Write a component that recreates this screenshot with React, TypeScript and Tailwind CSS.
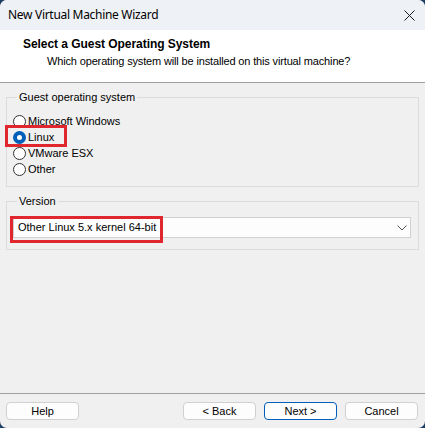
import React from "react";

const body = { fontFamily: '"Liberation Sans", Arial, sans-serif' };

function Radio({ label, checked }: { label: string; checked?: boolean }) {
  return (
    <div className="flex h-[16px] items-center gap-[2px]">
      {checked ? (
        <span className="flex h-[13px] w-[13px] items-center justify-center rounded-full bg-[#005fb8]">
          <span className="h-[5px] w-[5px] rounded-full bg-white" />
        </span>
      ) : (
        <span className="h-[13px] w-[13px] rounded-full border border-[#333] bg-white" />
      )}
      <span className="text-[11px] leading-[13px] text-black">{label}</span>
    </div>
  );
}

function Button({ label, primary }: { label: string; primary?: boolean }) {
  return (
    <button
      className={
        "h-[18px] w-[73px] rounded-[4px] bg-[#fdfdfd] text-[11px] leading-[16px] text-black " +
        (primary ? "border border-[#005fb8]" : "border border-[#d0d0d0]")
      }
    >
      {label}
    </button>
  );
}

export default function App() {
  return (
    <div className="h-[428px] w-[425px] bg-[#1d3f66]" style={body}>
      <div className="flex h-full flex-col overflow-hidden rounded-[7px] bg-[#f0f0f0]">
        {/* title bar */}
        <div className="flex h-[30px] shrink-0 items-center justify-between bg-[#eef1f6] pl-[8px] pr-[10px]">
          <span className="text-[12px] tracking-[-0.3px] text-black" style={{ fontFamily: '"Noto Sans", "Liberation Sans", sans-serif' }}>
            New Virtual Machine Wizard
          </span>
          <svg width="11" height="11" viewBox="0 0 11 11" className="text-[#1a1a1a]">
            <path d="M0.5 0.5 L10.5 10.5 M10.5 0.5 L0.5 10.5" stroke="currentColor" strokeWidth="1" />
          </svg>
        </div>

        {/* page header */}
        <div className="h-[53px] shrink-0 border-b border-[#a0a0a0] bg-white pl-[23px] pt-[7px]">
          <div className="text-[12px] font-bold leading-[14px] tracking-[-0.05px] text-black">Select a Guest Operating System</div>
          <div className="mt-[3px] pl-[24px] text-[11px] leading-[14px] tracking-[-0.15px] text-black">
            Which operating system will be installed on this virtual machine?
          </div>
        </div>

        {/* content */}
        <div className="flex flex-1 flex-col px-[6px] pr-[6px]">
          <fieldset className="mt-[8px] border border-[#dcdcdc] pb-[9px] pl-[6px] pr-[6px]">
            <legend className="ml-[4px] px-[2px] text-[11px] leading-[13px] text-black">Guest operating system</legend>
            <div className="mt-[9px] flex flex-col">
              <Radio label="Microsoft Windows" />
              <div className="relative">
                <Radio label="Linux" checked />
                <span className="absolute left-[-8px] top-[-4px] h-[22px] w-[62px] border-[3px] border-[#e0262f]" />
              </div>
              <Radio label="VMware ESX" />
              <Radio label="Other" />
            </div>
          </fieldset>

          <fieldset className="mt-[8px] border border-[#dcdcdc] pb-[11px] pl-[6px] pr-[7px]">
            <legend className="ml-[4px] px-[2px] text-[11px] leading-[13px] text-black">Version</legend>
            <div className="relative mt-[9px]">
              <div className="flex h-[21px] items-center justify-between border border-[#d0d0d0] bg-[#fdfdfd] pl-[4px] pr-[3px]">
                <span className="text-[11px] text-black">Other Linux 5.x kernel 64-bit</span>
                <svg width="10" height="6" viewBox="0 0 10 6">
                  <path d="M0.5 0.5 L5 5 L9.5 0.5" stroke="#555" strokeWidth="1" fill="none" />
                </svg>
              </div>
              <span className="absolute left-[-3px] top-[-1px] h-[27px] w-[153px] border-[3px] border-[#e0262f]" />
            </div>
          </fieldset>
        </div>

        {/* footer */}
        <div className="flex shrink-0 items-center justify-between border-t border-[#a0a0a0] px-[6px] pb-[8px] pr-[7px] pt-[8px]">
          <Button label="Help" />
          <div className="flex gap-[8px]">
            <Button label="< Back" />
            <Button label="Next >" primary />
            <Button label="Cancel" />
          </div>
        </div>
      </div>
    </div>
  );
}
